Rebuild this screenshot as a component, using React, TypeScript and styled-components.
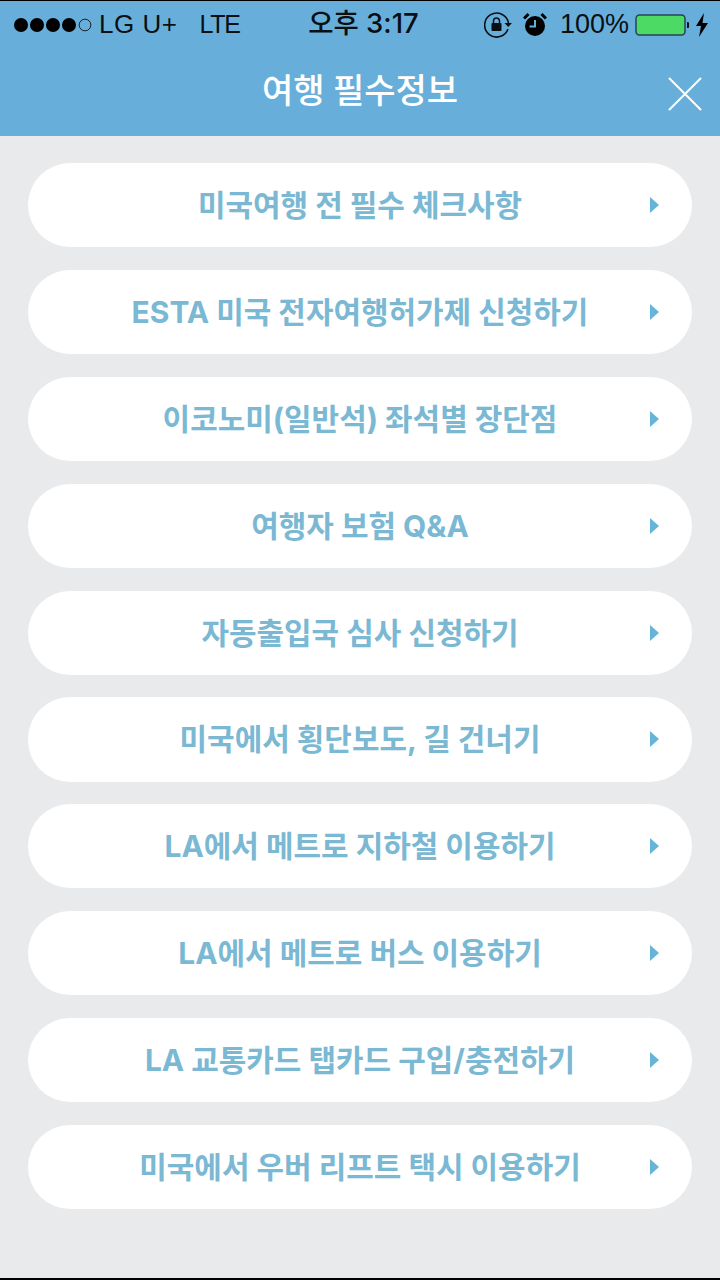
import React from "react";
import styled, { createGlobalStyle } from "styled-components";

const Global = createGlobalStyle`
  html, body { margin: 0; padding: 0; background: #e9eaec; }
  * { box-sizing: border-box; }
`;

const Page = styled.div`
  width: 720px;
  height: 1280px;
  display: flex;
  flex-direction: column;
  background: #e9eaec;
  border-top: 1px solid #000;
  border-bottom: 2px solid #000;
  font-family: Inter, "Noto Sans CJK KR", sans-serif;
  overflow: hidden;
`;

const Header = styled.header`
  height: 135px;
  flex: none;
  background: #67afda;
  display: flex;
  flex-direction: column;
`;

const StatusBar = styled.div`
  height: 47px;
  padding: 0 11px 0 14px;
  display: grid;
  grid-template-columns: 1fr auto 1fr;
  align-items: center;
  color: #0a0f14;
  font-family: "Liberation Sans", "Noto Sans CJK KR", sans-serif;
  font-size: 26px;
  font-weight: 400;
`;

const StatusLeft = styled.div`
  display: flex;
  align-items: center;
`;

const Dots = styled.div`
  display: flex;
  gap: 2px;
  margin-right: 7px;
`;

const Dot = styled.span<{ $empty?: boolean }>`
  width: 14px;
  height: 14px;
  border-radius: 50%;
  background: ${(p) => (p.$empty ? "transparent" : "#000")};
  border: ${(p) => (p.$empty ? "1.5px solid #111" : "none")};
  transform: ${(p) => (p.$empty ? "scale(.9)" : "none")};
`;

const Carrier = styled.span`
  margin-right: 22px;
  letter-spacing: 0.5px;
`;

const Lte = styled.span`
  font-size: 25px;
  letter-spacing: -1.2px;
`;

const Time = styled.div`
  font-family: Inter, "Noto Sans CJK KR", sans-serif;
  font-weight: 500;
  font-size: 27.5px;
  line-height: 1;
  transform: translate(2px, -1px);
`;

const StatusRight = styled.div`
  display: flex;
  align-items: center;
  justify-content: flex-end;
`;

const Percent = styled.span`
  margin: 0 6px 0 13px;
  font-size: 27px;
`;

const NavBar = styled.div`
  flex: 1;
  position: relative;
  display: flex;
  align-items: center;
  justify-content: center;
  padding-bottom: 3px;
`;

const Title = styled.h1`
  margin: 0;
  color: #fff;
  font-size: 34px;
  font-weight: 500;
  line-height: 1;
  font-family: Roboto, "Noto Sans CJK KR", sans-serif;
`;

const Close = styled.svg`
  position: absolute;
  right: 17px;
  top: 28px;
`;

const List = styled.main`
  flex: 1;
  padding: 27px 28px 0;
  display: flex;
  flex-direction: column;
  gap: 22.7px;
`;

const Row = styled.div`
  height: 84.2px;
  flex: none;
  background: #fff;
  border-radius: 42px;
  display: grid;
  grid-template-columns: 1fr auto 1fr;
  align-items: center;
  padding: 0 33px;
`;

const RowLabel = styled.span`
  grid-column: 2;
  color: #7ab8d3;
  font-size: 29.95px;
  font-weight: 700;
  white-space: nowrap;
  line-height: 1;
  transform: translateY(1px);
`;

const Arrow = styled.svg`
  grid-column: 3;
  justify-self: end;
`;

const items = [
  "미국여행 전 필수 체크사항",
  "ESTA 미국 전자여행허가제 신청하기",
  "이코노미(일반석) 좌석별 장단점",
  "여행자 보험 Q&A",
  "자동출입국 심사 신청하기",
  "미국에서 횡단보도, 길 건너기",
  "LA에서 메트로 지하철 이용하기",
  "LA에서 메트로 버스 이용하기",
  "LA 교통카드 탭카드 구입/충전하기",
  "미국에서 우버 리프트 택시 이용하기",
];

export default function App() {
  return (
    <Page>
      <Global />
      <Header>
        <StatusBar>
          <StatusLeft>
            <Dots>
              <Dot /><Dot /><Dot /><Dot /><Dot $empty />
            </Dots>
            <Carrier>LG U+</Carrier>
            <Lte>LTE</Lte>
          </StatusLeft>
          <Time>오후 3:17</Time>
          <StatusRight>
            <svg width="28" height="30" viewBox="0 0 28 30" fill="none">
              <path d="M24 19a12 12 0 1 1 .5-6" stroke="#0a0f14" strokeWidth="1.6" />
              <path d="M20.500 13h7.500l-3.800 4z" fill="#0a0f14" />
              <rect x="7.500" y="13" width="10" height="8" rx="1" fill="#0a0f14" />
              <path d="M9.500 13v-2a3 3 0 0 1 6 0v2" stroke="#0a0f14" strokeWidth="1.5" />
            </svg>
            <svg width="24" height="26" viewBox="0 0 24 26" style={{ marginLeft: 11 }}>
              <circle cx="12" cy="14" r="10" fill="#000" />
              <path d="M12 8v6.500H6.500" stroke="#67afda" strokeWidth="2" fill="none" />
              <path d="M1 6.500 5.500 2M23 6.500 18.500 2" stroke="#000" strokeWidth="3" />
            </svg>
            <Percent>100%</Percent>
            <svg width="54" height="24" viewBox="0 0 54 24">
              <rect x="1" y="2" width="49" height="20" rx="3.500" fill="#4cd964" stroke="#26435a" strokeWidth="1.500" />
              <path d="M52 9v6a3 3 0 0 0 0-6z" fill="#0a0f14" />
            </svg>
            <svg width="14" height="26" viewBox="0 0 14 26" style={{ marginLeft: 6 }}>
              <path d="M9 1 1 14h5l-2 11 9-14H7.500z" fill="#000" />
            </svg>
          </StatusRight>
        </StatusBar>
        <NavBar>
          <Title>여행 필수정보</Title>
          <Close width="36" height="36" viewBox="0 0 36 36">
            <path d="M2 2 34 34M34 2 2 34" stroke="#fff" strokeWidth="2" />
          </Close>
        </NavBar>
      </Header>
      <List>
        {items.map((t) => (
          <Row key={t}>
            <RowLabel>{t}</RowLabel>
            <Arrow width="9" height="16" viewBox="0 0 9 16">
              <path d="M0 0 9 8 0 16z" fill="#66b5d9" />
            </Arrow>
          </Row>
        ))}
      </List>
    </Page>
  );
}
